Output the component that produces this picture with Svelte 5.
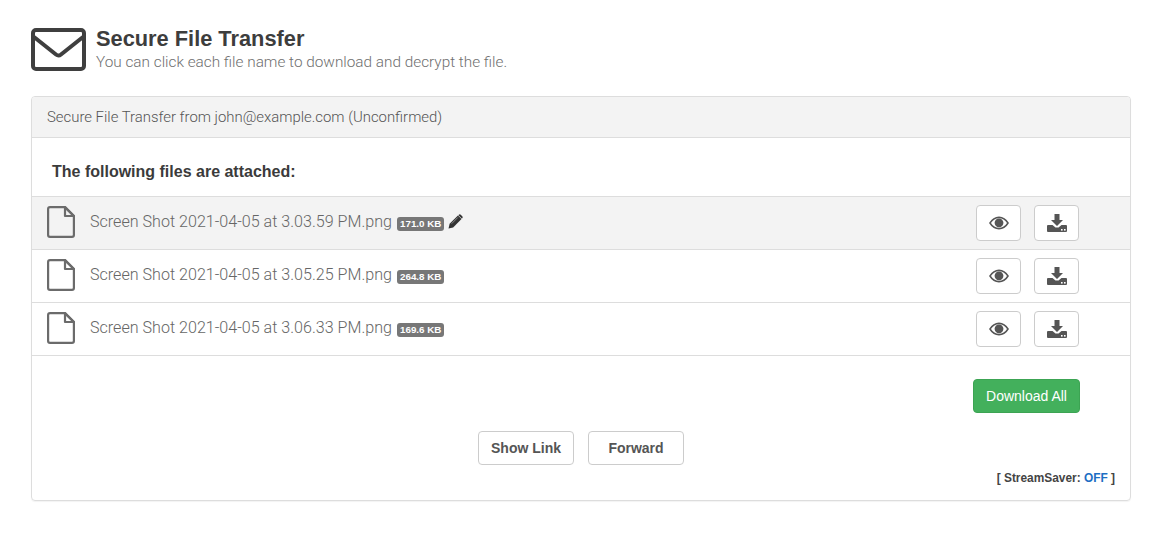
<script>
  const files = [
    { name: 'Screen Shot 2021-04-05 at 3.03.59 PM.png', size: '171.0 KB', active: true },
    { name: 'Screen Shot 2021-04-05 at 3.05.25 PM.png', size: '264.8 KB' },
    { name: 'Screen Shot 2021-04-05 at 3.06.33 PM.png', size: '169.6 KB' }
  ];
</script>

<div class="page">
  <header class="head">
    <svg class="env" width="55" height="43" viewBox="0 0 55 43" aria-hidden="true">
      <rect x="2" y="2" width="51" height="39" rx="3" fill="none" stroke="#3f3f3f" stroke-width="4"/>
      <path d="M3 9 L25 26.5 Q27.5 28.5 30 26.5 L52 9" fill="none" stroke="#3f3f3f" stroke-width="4"/>
    </svg>
    <div>
      <h1>Secure File Transfer</h1>
      <p>You can click each file name to download and decrypt the file.</p>
    </div>
  </header>

  <section class="panel">
    <div class="panel-head">Secure File Transfer from john@example.com (Unconfirmed)</div>
    <h2>The following files are attached:</h2>
    <ul>
      {#each files as f}
        <li class:active={f.active}>
          <svg class="doc" width="28" height="32" viewBox="0 0 28 32" aria-hidden="true">
            <path d="M3 1.1 H18 L26.9 10 V29 Q26.9 30.9 25 30.9 H3 Q1.1 30.9 1.1 29 V3 Q1.1 1.1 3 1.1 Z" fill="none" stroke="#6b6b6b" stroke-width="2.2"/>
            <path d="M18 1.1 V10 H26.9 Z" fill="none" stroke="#6b6b6b" stroke-width="2.2" stroke-linejoin="round"/>
          </svg>
          <span class="name">{f.name}</span>
          <span class="badge">{f.size}</span>
          {#if f.active}
            <svg class="pencil" width="15" height="15" viewBox="0 0 14 14" aria-hidden="true">
              <path d="M0.5 13.5 L1.5 9.2 L9.3 1.4 L12.6 4.7 L4.8 12.5 Z" fill="#333"/>
              <path d="M10.1 0.7 Q11 -0.1 11.9 0.7 L13.3 2.1 Q14.1 3 13.3 3.9 L12.9 4.3 L9.7 1.1 Z" fill="#333"/>
              <path d="M3.4 9 L9.2 3.2" stroke="#bbb" stroke-width="0.6"/>
            </svg>
          {/if}
          <div class="actions">
            <button class="icon-btn" aria-label="Preview">
              <svg width="20" height="14" viewBox="0 0 20 14" aria-hidden="true">
                <path fill-rule="evenodd" d="M0 7 Q4 0.5 10 0.5 Q16 0.5 20 7 Q16 13.5 10 13.5 Q4 13.5 0 7 Z M2 7 Q5 11.8 10 11.8 Q15 11.8 18 7 Q15 2.2 10 2.2 Q5 2.2 2 7 Z" fill="#555"/>
                <circle cx="10" cy="6.8" r="4.4" fill="#555"/>
              </svg>
            </button>
            <button class="icon-btn" aria-label="Download">
              <svg width="20" height="18" viewBox="0 0 20 18" aria-hidden="true">
                <path d="M7.5 0 H12.5 V6 H16 L10 12 L4 6 H7.5 Z" fill="#555"/>
                <path fill-rule="evenodd" d="M1 11 H5.5 L8.5 13.5 H11.5 L14.5 11 H19 Q20 11 20 12 V17 Q20 18 19 18 H1 Q0 18 0 17 V12 Q0 11 1 11 Z" fill="#555"/>
                <rect x="14" y="15" width="1.6" height="1.6" fill="#fff"/>
                <rect x="17" y="15" width="1.6" height="1.6" fill="#fff"/>
              </svg>
            </button>
          </div>
        </li>
      {/each}
    </ul>
    <div class="all-row"><button class="success">Download All</button></div>
    <div class="links">
      <button class="plain">Show Link</button>
      <button class="plain">Forward</button>
    </div>
    <div class="saver">[ StreamSaver: <span>OFF</span> ]</div>
  </section>
</div>

<style>
  :global(body) {
    margin: 0;
    background: #fff;
    font-family: "Liberation Sans", Arial, sans-serif;
    color: #333;
  }
  .page { width: 1100px; padding: 27px 25px 38px 31px; }
  .head { display: flex; align-items: flex-start; gap: 10px; height: 46px; margin-bottom: 23px; }
  .env { display: block; margin-top: 1px; }
  h1 { margin: 0; font-size: 21.8px; line-height: 24px; font-weight: 700; color: #3d3d3d; }
  .head p { margin: 3px 0 0; font-family: Roboto, "Liberation Sans", sans-serif; font-weight: 300; font-size: 15.33px; line-height: 17px; color: #6f6f6f; }
  .panel {
    box-sizing: border-box;
    height: 405px;
    border: 1px solid #ddd;
    border-radius: 4px;
    box-shadow: 0 1px 1px rgba(0,0,0,.05);
  }
  .panel-head {
    box-sizing: border-box;
    height: 41px;
    line-height: 40px;
    padding-left: 15px;
    font-family: Roboto, "Liberation Sans", sans-serif;
    font-weight: 300;
    font-size: 14.9px;
    color: #555;
    background: #f3f3f3;
    border-bottom: 1px solid #ddd;
    border-radius: 3px 3px 0 0;
  }
  h2 { margin: 0; padding: 0 20px; height: 58px; line-height: 67px; font-size: 16px; font-weight: 700; color: #3b3b3b; }
  ul { list-style: none; margin: 0; padding: 0; border-top: 1px solid #ddd; }
  li {
    box-sizing: border-box;
    height: 53px;
    display: flex;
    align-items: center;
    padding-left: 15px;
    border-bottom: 1px solid #ddd;
  }
  li.active { background: #f3f3f3; }
  .doc { display: block; margin-top: -3px; }
  .name {
    margin: -4px 0 0 15px;
    font-family: Roboto, "Liberation Sans", sans-serif;
    font-weight: 300;
    font-size: 16.1px;
    color: #666;
    white-space: nowrap;
  }
  .badge {
    margin-left: 5px;
    margin-top: 1px;
    padding: 0 3px;
    height: 14px;
    line-height: 14px;
    font-size: 9.8px;
    font-weight: 700;
    color: #fff;
    background: #777;
    border-radius: 3px;
    white-space: nowrap;
  }
  .pencil { margin: -3px 0 0 4px; }
  .actions { margin-left: auto; margin-right: 51px; display: flex; gap: 13px; }
  button { font-family: inherit; cursor: pointer; box-sizing: border-box; }
  .icon-btn {
    width: 45px;
    height: 36px;
    padding: 0;
    display: flex;
    align-items: center;
    justify-content: center;
    background: #fff;
    border: 1px solid #ccc;
    border-radius: 4px;
  }
  .all-row { display: flex; justify-content: flex-end; padding: 23px 50px 0 0; }
  .success {
    width: 107px;
    height: 34px;
    background: #43b05c;
    border: 1px solid #3ca453;
    border-radius: 4px;
    color: #fff;
    font-size: 14px;
  }
  .links { display: flex; justify-content: center; gap: 14px; margin-top: 18px; }
  .plain {
    width: 96px;
    height: 34px;
    background: #fff;
    border: 1px solid #ccc;
    border-radius: 4px;
    color: #555;
    font-size: 14px;
    font-weight: 700;
  }
  .saver { text-align: right; margin-top: 5px; padding-right: 15px; font-size: 11.9px; line-height: 16px; font-weight: 700; color: #444; }
  .saver span { color: #1d6fc4; }
</style>
